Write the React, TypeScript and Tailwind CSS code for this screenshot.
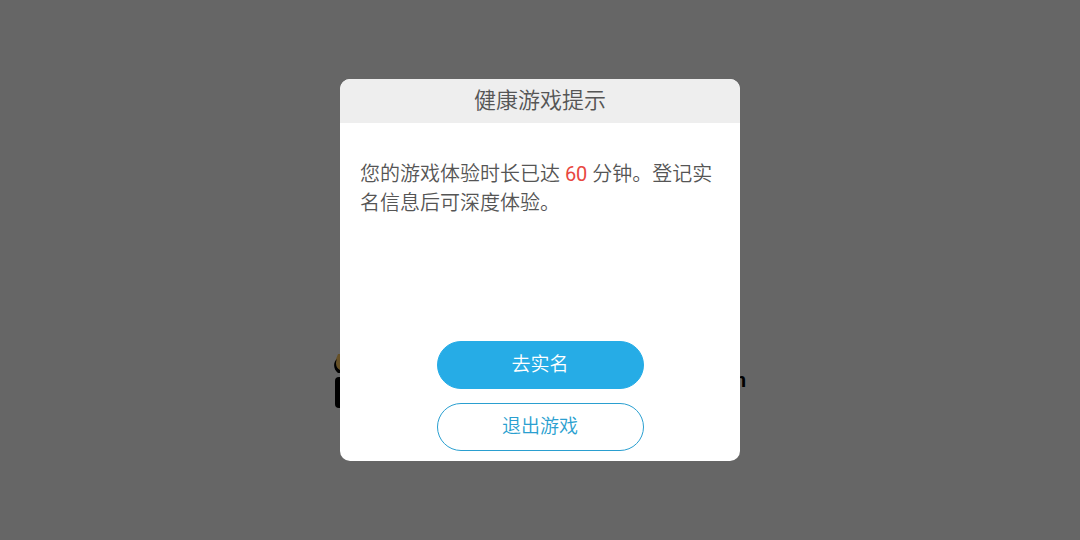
import React from 'react';

const ACTIONS = [
  { id: 'verify', label: '去实名', style: 'bg-[#26ace6] border-[#26ace6] text-white' },
  { id: 'quit', label: '退出游戏', style: 'bg-white border-[#2a9fd0] text-[#2a9fd0]' },
];

// Publisher logo on the splash screen, mostly hidden by the dialog
function SplashLogo() {
  return (
    <div className="w-[412px] h-16 mt-[220px] flex items-center justify-between">
      <svg viewBox="0 0 48 60" className="w-12 h-15" aria-hidden="true">
        <path d="M2 9 L4 4 H30 V20 H6 C2 18 1 14 2 9 Z" fill="#ffc860" />
        <path d="M3 9 C-1 12 -1 19 4 23 H20 V20 H6 C2 18 1 13 3 9 Z" fill="#000" />
        <rect x="1" y="27" width="46" height="31" rx="4" fill="#000" />
      </svg>
      <span className="text-xl leading-none font-bold text-black">m</span>
    </div>
  );
}

export default function App() {
  return (
    <div className="relative min-h-screen w-full bg-white overflow-hidden flex items-center justify-center font-['Roboto','Noto_Sans_CJK_SC',sans-serif]">
      <SplashLogo />

      {/* Mask + dialog */}
      <div className="absolute inset-0 bg-black/60 flex items-center justify-center">
        <section
          role="dialog"
          aria-modal="true"
          aria-labelledby="dialog-title"
          className="w-[400px] bg-white rounded-[10px] overflow-hidden"
        >
          <h1 id="dialog-title" className="py-1.5 bg-[#eeeeee] text-center text-[22px] leading-8 font-[350] text-[#555555]">
            健康游戏提示
          </h1>

          <p className="min-h-[181px] mt-[37px] px-5 text-[20px] leading-[29px] font-[350] text-[#555555]">
            您的游戏体验时长已达 <span className="font-normal text-[#e8473f]">60</span> 分钟。登记实名信息后可深度体验。
          </p>

          <div className="flex flex-col items-center gap-3.5 pb-2.5">
            {ACTIONS.map(({ id, label, style }) => (
              <button
                key={id}
                type="button"
                className={`w-[207px] h-12 rounded-full border text-[19px] leading-7 font-[350] cursor-pointer ${style}`}
              >
                {label}
              </button>
            ))}
          </div>
        </section>
      </div>
    </div>
  );
}
